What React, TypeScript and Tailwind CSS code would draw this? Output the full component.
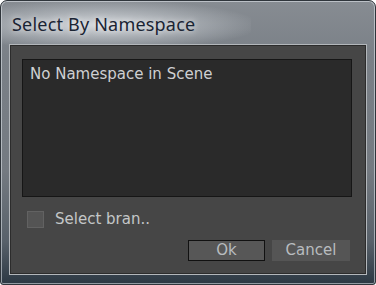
import React from "react";

export default function App() {
  return (
    <div className="w-[376px] h-[285px] overflow-hidden bg-white">
      <div className="relative w-[376px] h-[285px] rounded-t-[7px] rounded-b-[3px] border border-[#2f353b] bg-[linear-gradient(180deg,#878c92_0%,#7a8087_20%,#747a81_60%,#58616a_85%,#2c3843_100%)] shadow-[inset_0_0_0_1px_rgba(230,235,240,0.55)] flex flex-col">
        <div className="pointer-events-none absolute left-[0px] top-[0px] w-[250px] h-[48px] bg-[radial-gradient(ellipse_at_40%_50%,rgba(225,228,232,0.85)_0%,rgba(200,205,210,0.45)_45%,rgba(150,155,160,0)_75%)]" />
        <div className="relative h-[43px] flex items-center pl-[11px] pt-[2px]">
          <span
            className="text-[18px] leading-none text-[#1a2433] tracking-[0.2px] [text-shadow:0_0_6px_rgba(255,255,255,0.9)]"
            style={{ fontFamily: "'Noto Sans', 'Open Sans', sans-serif" }}
          >
            Select By Namespace
          </span>
        </div>
        <div className="relative ml-[8px] w-[358px] h-[231px] border border-[#b3b7bb] bg-[#464646] shadow-[inset_0_0_0_1px_#2c2c2c] flex flex-col">
          <div className="ml-[12px] mt-[14px] w-[330px] h-[138px] border border-[#161616] bg-[#2a2a2a] px-[7px] pt-[1px]">
            <span
              className="text-[15px] leading-[18px] text-[#cfd0d2]"
              style={{ fontFamily: "'DejaVu Sans', Tahoma, sans-serif" }}
            >
              No Namespace in Scene
            </span>
          </div>
          <div className="ml-[17px] mt-[13px] flex items-center gap-[11px]">
            <div className="w-[17px] h-[17px] border border-[#626262] bg-[#545454]" />
            <span
              className="text-[15px] leading-[18px] text-[#c4c6c8]"
              style={{ fontFamily: "'DejaVu Sans', Tahoma, sans-serif" }}
            >
              Select bran..
            </span>
          </div>
          <div className="mt-[12px] ml-[178px] flex gap-[7px]">
            <div
              className="w-[77px] h-[21px] border border-[#111111] bg-[#575757] flex items-center justify-center text-[15px] text-[#b8bcbf]"
              style={{ fontFamily: "'DejaVu Sans', Tahoma, sans-serif" }}
            >
              Ok
            </div>
            <div
              className="w-[78px] h-[21px] bg-[#555555] flex items-center justify-center text-[15px] text-[#b8bcbf]"
              style={{ fontFamily: "'DejaVu Sans', Tahoma, sans-serif" }}
            >
              Cancel
            </div>
          </div>
        </div>
      </div>
    </div>
  );
}
